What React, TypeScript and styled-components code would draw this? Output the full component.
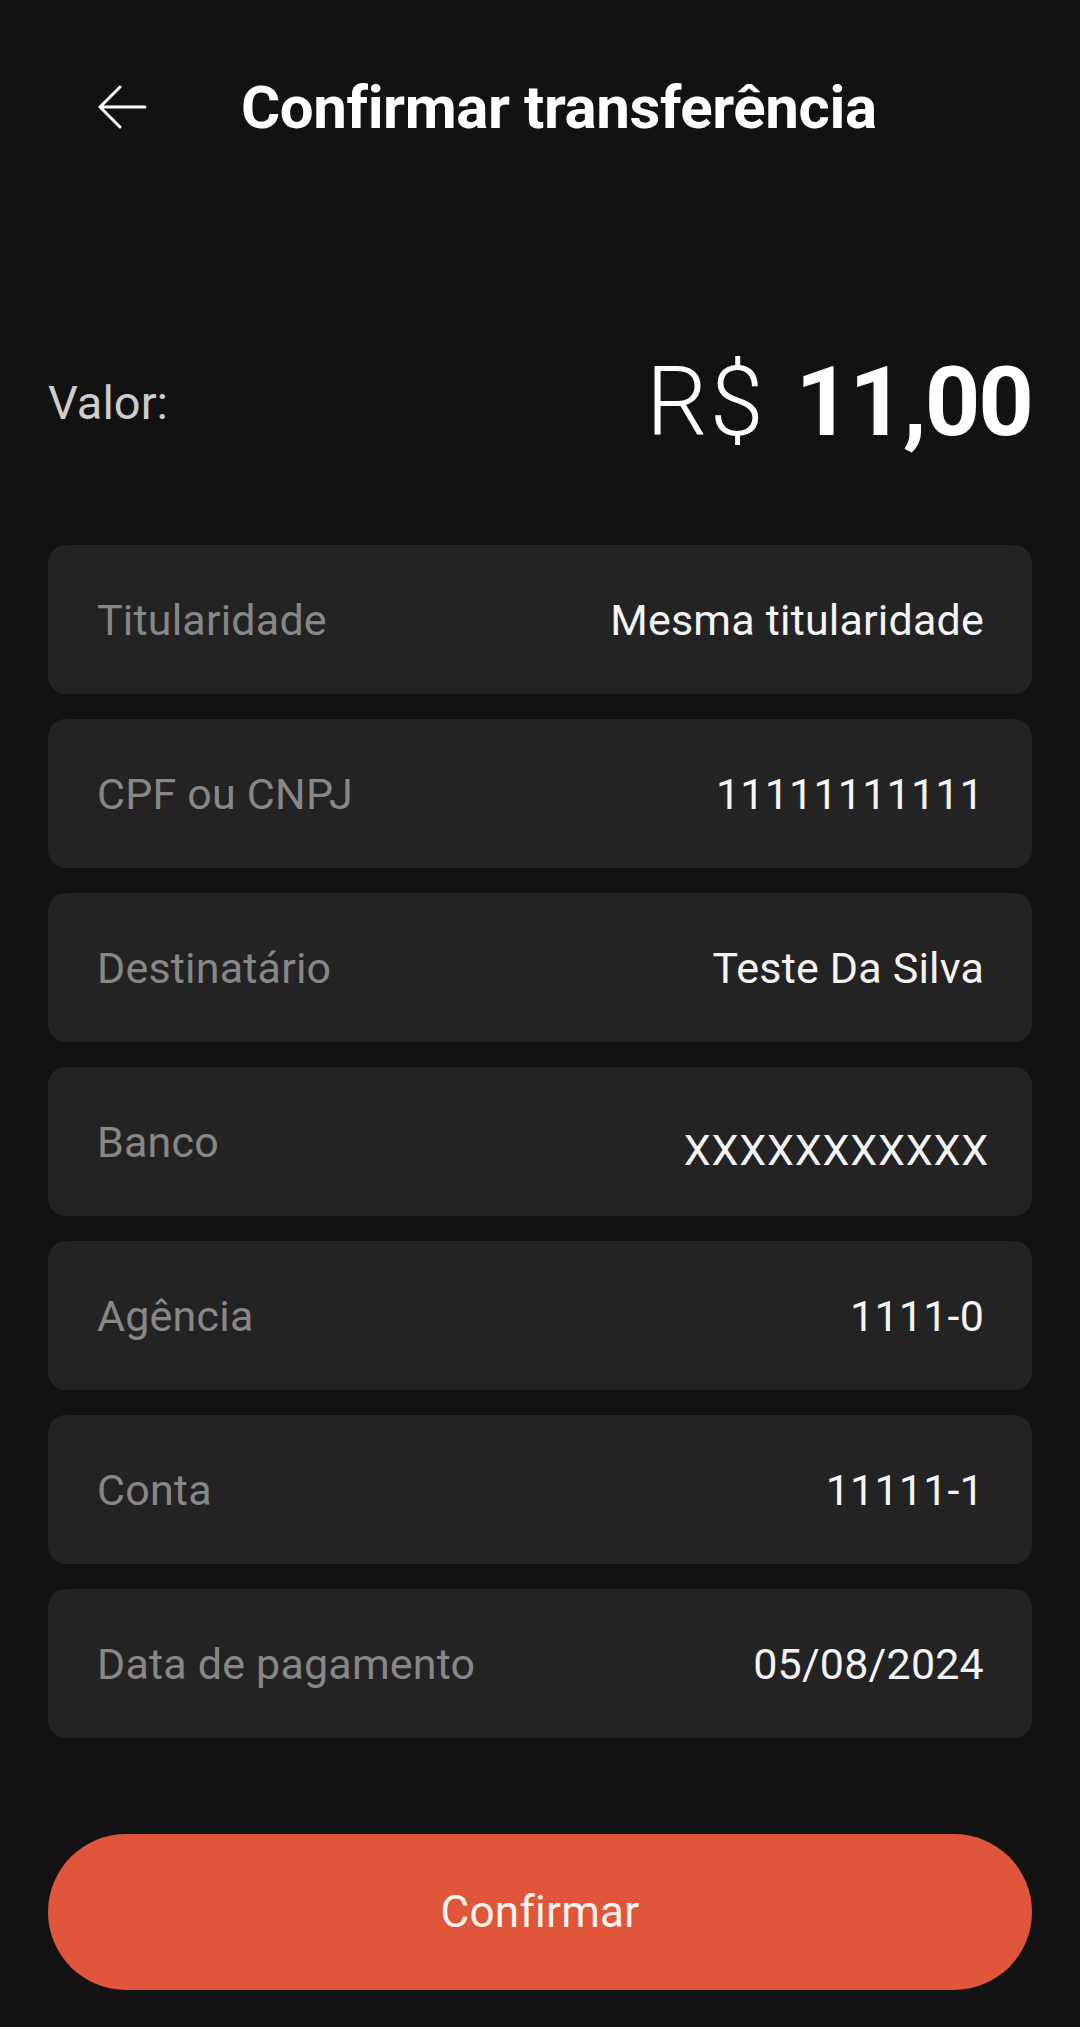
import React from "react";
import styled, { createGlobalStyle } from "styled-components";

const GlobalStyle = createGlobalStyle`
    html, body {
        margin: 0;
        padding: 0;
        background-color: #121212;
    }
    body {
        font-family: Roboto, "Noto Sans", "Liberation Sans", sans-serif;
        -webkit-font-smoothing: antialiased;
    }
`;

const Screen = styled.main`
    display: flex;
    flex-direction: column;
    box-sizing: border-box;
    width: 1080px;
    min-height: 2027px;
    padding: 0 48px;
    background-color: #121212;
    color: #ffffff;
`;

const Header = styled.header`
    display: flex;
    align-items: center;
    gap: 94px;
    height: 214px;
    padding-left: 50px;
`;

const BackButton = styled.button`
    display: flex;
    align-items: center;
    justify-content: center;
    padding: 0;
    border: none;
    background: none;
    color: #ffffff;
    cursor: pointer;
`;

const Title = styled.h1`
    margin: 0;
    font-size: 60px;
    font-weight: 700;
    letter-spacing: -0.4px;
    color: #ffffff;
`;

const AmountRow = styled.section`
    display: flex;
    align-items: center;
    justify-content: space-between;
    height: 120px;
    margin-top: 128px;
`;

const AmountLabel = styled.span`
    font-size: 47px;
    font-weight: 400;
    color: #cdcdcd;
`;

const Amount = styled.span`
    display: flex;
    align-items: baseline;
    gap: 30px;
    font-size: 97px;
    line-height: 1;
    color: #ffffff;
`;

const Currency = styled.span`
    font-weight: 300;
    letter-spacing: 2px;
`;

const Figure = styled.span`
    font-weight: 700;
    letter-spacing: -2px;
`;

const DetailList = styled.ul`
    display: flex;
    flex-direction: column;
    gap: 25px;
    margin: 83px 0 0;
    padding: 0;
    list-style: none;
`;

const DetailCard = styled.li`
    display: flex;
    align-items: center;
    justify-content: space-between;
    height: 149px;
    padding: 0 48px 0 49px;
    box-sizing: border-box;
    border-radius: 18px;
    background-color: #232323;
`;

const DetailLabel = styled.span`
    font-size: 43px;
    letter-spacing: 0.2px;
    color: #878787;
`;

const DetailValue = styled.span<{ $dropped?: boolean }>`
    font-size: 43px;
    letter-spacing: ${(p) => (p.$dropped ? "0.8px" : "0.2px")};
    color: #f4f4f4;
    margin-top: ${(p) => (p.$dropped ? "16px" : "0")};
    margin-right: ${(p) => (p.$dropped ? "-5px" : "0")};
`;

const ConfirmButton = styled.button`
    display: flex;
    align-items: center;
    justify-content: center;
    height: 156px;
    margin-top: 96px;
    border: none;
    border-radius: 78px;
    background-color: #e0563a;
    color: #fff4ee;
    font-family: Roboto, "Noto Sans", "Liberation Sans", sans-serif;
    font-size: 44px;
    font-weight: 400;
    letter-spacing: 0.3px;
    cursor: pointer;
`;

const details = [
    { label: "Titularidade", value: "Mesma titularidade" },
    { label: "CPF ou CNPJ", value: "11111111111" },
    { label: "Destinatário", value: "Teste Da Silva" },
    { label: "Banco", value: "XXXXXXXXXXX", dropped: true },
    { label: "Agência", value: "1111-0" },
    { label: "Conta", value: "11111-1" },
    { label: "Data de pagamento", value: "05/08/2024" },
];

const ArrowBack = () => (
    <svg width="49" height="44" viewBox="0 0 49 44" fill="none">
        <path
            d="M47 22H3M22 2L2 22L22 42"
            stroke="currentColor"
            strokeWidth="3"
            strokeLinecap="round"
            strokeLinejoin="round"
        />
    </svg>
);

const App = () => {
    return (
        <Screen>
            <GlobalStyle />
            <Header>
                <BackButton aria-label="Voltar">
                    <ArrowBack />
                </BackButton>
                <Title>Confirmar transferência</Title>
            </Header>

            <AmountRow>
                <AmountLabel>Valor:</AmountLabel>
                <Amount>
                    <Currency>R$</Currency>
                    <Figure>11,00</Figure>
                </Amount>
            </AmountRow>

            <DetailList>
                {details.map((item) => (
                    <DetailCard key={item.label}>
                        <DetailLabel>{item.label}</DetailLabel>
                        <DetailValue $dropped={item.dropped}>
                            {item.value}
                        </DetailValue>
                    </DetailCard>
                ))}
            </DetailList>

            <ConfirmButton>Confirmar</ConfirmButton>
        </Screen>
    );
};

export default App;
